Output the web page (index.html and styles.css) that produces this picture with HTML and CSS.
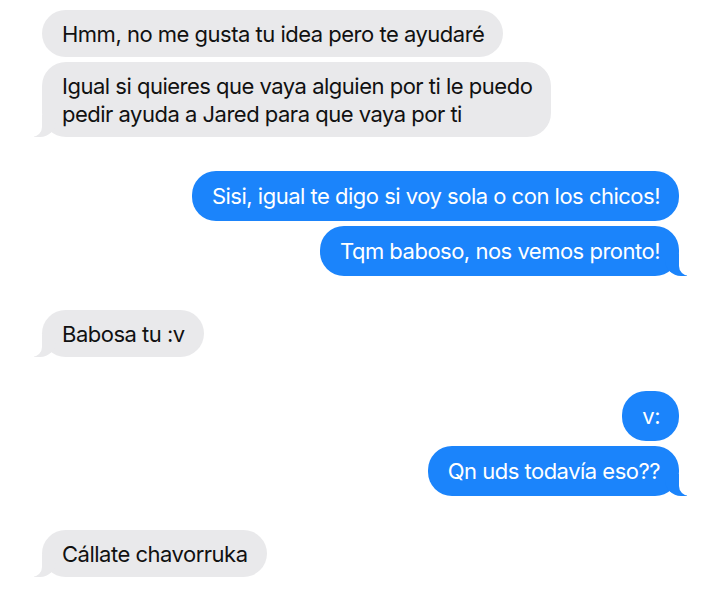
FILE: index.html
```html
<!DOCTYPE html>
<html lang="es">
<head>
  <meta charset="UTF-8" />
  <meta name="viewport" content="width=device-width, initial-scale=1.0"/>
  <title>Mensajes</title>
  <link rel="stylesheet" href="styles.css">
</head>
<body>
  <div class="chat">
    <div class="bubble them">Hmm, no me gusta tu idea pero te ayudaré</div>
    <div class="bubble them tail">Igual si quieres que vaya alguien por ti le puedo<br>pedir ayuda a Jared para que vaya por ti</div>

    <div class="bubble me group-start">Sisi, igual te digo si voy sola o con los chicos!</div>
    <div class="bubble me tail">Tqm baboso, nos vemos pronto!</div>

    <div class="bubble them tail group-start">Babosa tu :v</div>

    <div class="bubble me group-start">v:</div>
    <div class="bubble me tail">Qn uds todavía eso??</div>

    <div class="bubble them tail group-start">Cállate chavorruka</div>
  </div>
</body>
</html>
```

FILE: styles.css
```css
body {
  margin: 0;
  background-color: #ffffff;
  font-family: 'Inter', 'Noto Sans', sans-serif;
}

.chat {
  display: flex;
  flex-direction: column;
  gap: 5px;
  padding: 10px 41px 0 42px;
}

.bubble {
  position: relative;
  font-size: 22px;
  letter-spacing: -0.5px;
  line-height: 28px;
  padding: 10px 19px 9px 20px;
  border-radius: 24px;
  max-width: 520px;
}

.them {
  align-self: flex-start;
  background-color: #e9e9eb;
  color: #111111;
}

.me {
  align-self: flex-end;
  background-color: #1b84fb;
  color: #ffffff;
  padding: 11px 19px 11px 20px;
}

.group-start {
  margin-top: 29px;
}

/* little tails under the last bubble of a group */
.tail::before,
.tail::after {
  content: "";
  position: absolute;
  bottom: 0;
  height: 22px;
}

.them.tail::before {
  left: -8px;
  width: 22px;
  background-color: #e9e9eb;
  border-bottom-right-radius: 16px;
}

.them.tail::after {
  left: -10px;
  width: 10px;
  background-color: #ffffff;
  border-bottom-right-radius: 10px;
}

.me.tail::before {
  right: -8px;
  width: 22px;
  background-color: #1b84fb;
  border-bottom-left-radius: 16px;
}

.me.tail::after {
  right: -10px;
  width: 10px;
  background-color: #ffffff;
  border-bottom-left-radius: 10px;
}
```
